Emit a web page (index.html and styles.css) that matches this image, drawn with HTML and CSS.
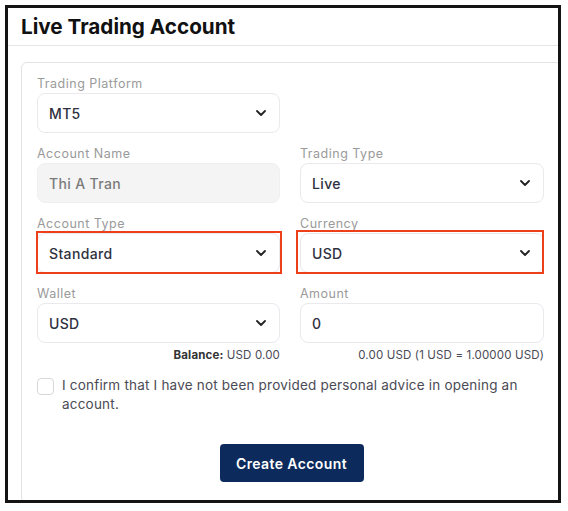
FILE: index.html
```html
<!DOCTYPE html>
<html lang="en">
<head>
<meta charset="utf-8">
<title>Live Trading Account</title>
<link rel="stylesheet" href="styles.css">
</head>
<body>
<div class="frame">
  <header class="page-head">
    <h1 class="page-title">Live Trading Account</h1>
  </header>
  <section class="card">
    <form class="form-grid">
      <div class="field">
        <label class="field-label">Trading Platform</label>
        <div class="select">
          <span class="select-value">MT5</span>
          <svg class="chevron" viewBox="0 0 10 6" width="10" height="6"><path d="M1 1l4 4 4-4" fill="none" stroke="currentColor" stroke-width="1.8" stroke-linecap="round" stroke-linejoin="round"/></svg>
        </div>
      </div>
      <div class="field empty"></div>

      <div class="field">
        <label class="field-label">Account Name</label>
        <div class="input readonly">Thi A Tran</div>
      </div>
      <div class="field">
        <label class="field-label">Trading Type</label>
        <div class="select">
          <span class="select-value">Live</span>
          <svg class="chevron" viewBox="0 0 10 6" width="10" height="6"><path d="M1 1l4 4 4-4" fill="none" stroke="currentColor" stroke-width="1.8" stroke-linecap="round" stroke-linejoin="round"/></svg>
        </div>
      </div>

      <div class="field">
        <label class="field-label">Account Type</label>
        <div class="select flagged flagged-left">
          <span class="select-value">Standard</span>
          <svg class="chevron" viewBox="0 0 10 6" width="10" height="6"><path d="M1 1l4 4 4-4" fill="none" stroke="currentColor" stroke-width="1.8" stroke-linecap="round" stroke-linejoin="round"/></svg>
        </div>
      </div>
      <div class="field">
        <label class="field-label">Currency</label>
        <div class="select flagged flagged-right">
          <span class="select-value">USD</span>
          <svg class="chevron" viewBox="0 0 10 6" width="10" height="6"><path d="M1 1l4 4 4-4" fill="none" stroke="currentColor" stroke-width="1.8" stroke-linecap="round" stroke-linejoin="round"/></svg>
        </div>
      </div>

      <div class="field">
        <label class="field-label">Wallet</label>
        <div class="select">
          <span class="select-value">USD</span>
          <svg class="chevron" viewBox="0 0 10 6" width="10" height="6"><path d="M1 1l4 4 4-4" fill="none" stroke="currentColor" stroke-width="1.8" stroke-linecap="round" stroke-linejoin="round"/></svg>
        </div>
        <p class="note"><b>Balance:</b> USD 0.00</p>
      </div>
      <div class="field">
        <label class="field-label">Amount</label>
        <div class="input">0</div>
        <p class="note">0.00 USD (1 USD = 1.00000 USD)</p>
      </div>
    </form>

    <label class="confirm">
      <span class="checkbox"></span>
      <span class="confirm-text">I confirm that I have not been provided personal advice in opening an account.</span>
    </label>

    <div class="actions">
      <button class="btn-primary" type="button">Create Account</button>
    </div>
  </section>
</div>
</body>
</html>
```

FILE: styles.css
```css
* {
  box-sizing: border-box;
}

html, body {
  margin: 0;
  padding: 0;
  background: #ffffff;
}

body {
  font-family: "Inter", "Open Sans", sans-serif;
  color: #2f3140;
}

.frame {
  margin: 5px 0 0 5px;
  width: 556px;
  height: 498px;
  border: 3px solid #141414;
  overflow: hidden;
  background: #ffffff;
}

.page-head {
  height: 38px;
  padding: 0 0 0 13px;
  border-bottom: 1px solid #e6e6e6;
  display: flex;
  align-items: center;
}

.page-title {
  margin: 0;
  font-size: 20.7px;
  font-weight: 700;
  color: #111111;
  letter-spacing: 0;
}

.card {
  margin: 16px 0 0 13px;
  width: 541px;
  border: 1px solid #e3e3e3;
  border-radius: 6px;
  padding: 13px 15px 20px;
}

.form-grid {
  margin: 0;
  display: grid;
  grid-template-columns: 243px 244px;
  column-gap: 20px;
  row-gap: 13px;
}

.field-label {
  display: block;
  font-size: 12.5px;
  line-height: 16px;
  letter-spacing: 0.5px;
  color: #9a9a9a;
  margin-bottom: 1px;
}

.select,
.input {
  position: relative;
  height: 40px;
  border: 1px solid #e9e9ee;
  border-radius: 8px;
  background: #ffffff;
  display: flex;
  align-items: center;
  padding: 0 11px;
  font-size: 14px;
  font-weight: 500;
  letter-spacing: 0.35px;
  color: #2f3140;
}

.select {
  justify-content: space-between;
}

.input.readonly {
  background: #f4f4f4;
  border-color: #f0f0f0;
  color: #7b7b7b;
}

.chevron {
  color: #222222;
  margin-right: 2px;
}

/* red highlight drawn round a flagged select */
.flagged::after {
  content: "";
  position: absolute;
  border: 2px solid #ee3f1b;
  pointer-events: none;
}

.flagged-left::after {
  left: -2px;
  right: -3px;
  top: -3px;
  bottom: -2px;
}

.flagged-right::after {
  left: -5px;
  right: -1px;
  top: -4px;
  bottom: -2px;
}

.note {
  margin: 4px 0 0;
  text-align: right;
  font-size: 11.5px;
  line-height: 16px;
  letter-spacing: 0.15px;
  color: #4a4a55;
}

.note b {
  font-weight: 700;
  color: #333333;
}

.confirm {
  margin-top: 13px;
  display: flex;
  align-items: flex-start;
  gap: 8px;
  font-size: 13.5px;
  line-height: 19px;
  letter-spacing: 0.2px;
  color: #4b4b55;
}

.checkbox {
  flex: 0 0 17px;
  width: 17px;
  height: 17px;
  margin-top: 2px;
  border: 1px solid #d8d8dc;
  border-radius: 4px;
  background: #ffffff;
}

.confirm-text {
  padding-right: 10px;
}

.actions {
  margin-top: 30px;
  display: flex;
  justify-content: center;
}

.btn-primary {
  width: 144px;
  height: 38px;
  border: none;
  border-radius: 4px;
  background: #0c2a5b;
  color: #ffffff;
  font-family: inherit;
  font-size: 14px;
  font-weight: 600;
  letter-spacing: 0.4px;
}
```
